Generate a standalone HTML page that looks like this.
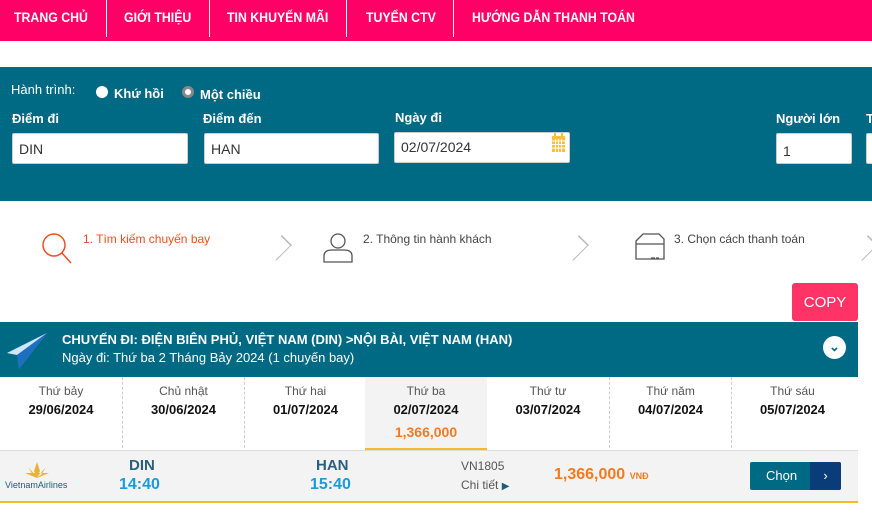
<!DOCTYPE html><html><head><meta charset="utf-8"><style>
*{margin:0;padding:0;box-sizing:border-box}
body{width:872px;height:526px;overflow:hidden;background:#fff;font-family:"Liberation Sans",sans-serif;position:relative}
.a{position:absolute}
.nav{left:0;top:0;width:872px;height:41px;background:#ff0066}
.nav span{position:absolute;top:9px;color:#fff;font-size:14px;font-weight:bold;transform:scaleX(.88);transform-origin:left}
.sep{position:absolute;top:0;width:1px;height:37px;background:#fff}
.teal{left:0;top:67px;width:872px;height:134px;background:#006a85}
.lbl{color:#fff;font-size:13px;font-weight:bold}
.in{background:#fff;border:1px solid #ccc;border-radius:2px;height:31px;font-size:14px;color:#333;padding:7px 0 0 6px}
.step{font-size:12px;color:#444}
.chev{width:14px;height:14px;border-right:1px solid #bbb;border-top:1px solid #bbb;transform:rotate(45deg) scaleY(1.6)}
.day{top:377px;width:122px;height:71px;text-align:center;font-size:12px;color:#555;padding-top:7px}
.day b{display:block;color:#111;font-size:13px;margin-top:4px}
</style></head><body>
<div class="a nav">
<span style="left:14px">TRANG CHỦ</span><div class="sep" style="left:106px"></div>
<span style="left:124px">GIỚI THIỆU</span><div class="sep" style="left:209px"></div>
<span style="left:227px">TIN KHUYẾN MÃI</span><div class="sep" style="left:346px"></div>
<span style="left:366px">TUYỂN CTV</span><div class="sep" style="left:453px"></div>
<span style="left:472px">HƯỚNG DẪN THANH TOÁN</span>
</div>
<div class="a teal">
<div class="a" style="left:11px;top:15px;color:#fff;font-size:13px">Hành trình:</div>
<div class="a" style="left:96px;top:19px;width:12px;height:12px;border-radius:50%;background:#fff"></div>
<div class="a lbl" style="left:114px;top:19px">Khứ hồi</div>
<div class="a" style="left:182px;top:19px;width:12px;height:12px;border-radius:50%;background:#fff;border:3px solid #888"></div>
<div class="a lbl" style="left:200px;top:20px">Một chiều</div>
<div class="a lbl" style="left:12px;top:44px">Điểm đi</div>
<div class="a lbl" style="left:203px;top:44px">Điểm đến</div>
<div class="a lbl" style="left:395px;top:43px">Ngày đi</div>
<div class="a lbl" style="left:776px;top:44px">Người lớn</div>
<div class="a lbl" style="left:866px;top:44px">T</div>
<div class="a in" style="left:12px;top:66px;width:176px">DIN</div>
<div class="a in" style="left:204px;top:66px;width:175px">HAN</div>
<div class="a in" style="left:394px;top:65px;width:176px;padding-top:6px">02/07/2024
<svg class="a" style="right:4px;top:-1px" width="13" height="22" viewBox="0 0 13 22"><rect x="0" y="4" width="13" height="16" fill="#fbbf3a"/><g stroke="#fff" stroke-width="1"><path d="M0 9H13M0 12.5H13M0 16H13M3.5 7V20M6.5 7V20M9.5 7V20"/></g><rect x="2" y="1" width="2" height="5" fill="#fbbf3a"/><rect x="9" y="1" width="2" height="5" fill="#fbbf3a"/></svg></div>
<div class="a in" style="left:776px;top:66px;width:76px;padding-top:9px">1</div>
<div class="a in" style="left:866px;top:66px;width:20px"></div>
</div>
<svg class="a" style="left:40px;top:231px" width="34" height="34"><circle cx="14" cy="14" r="11" fill="none" stroke="#f04e23" stroke-width="1.5"/><path d="M22 22L31 32" stroke="#f04e23" stroke-width="1.5"/></svg>
<div class="a step" style="left:83px;top:232px;color:#f04e23">1. Tìm kiếm chuyến bay</div>
<div class="a chev" style="left:272px;top:241px"></div>
<svg class="a" style="left:320px;top:231px" width="36" height="34"><circle cx="18" cy="10" r="7" fill="none" stroke="#555" stroke-width="1.3"/><path d="M4 31V25Q4 19 12 19H24Q32 19 32 25V31Z" fill="none" stroke="#555" stroke-width="1.3"/></svg>
<div class="a step" style="left:363px;top:232px">2. Thông tin hành khách</div>
<div class="a chev" style="left:569px;top:241px"></div>
<svg class="a" style="left:633px;top:231px" width="34" height="34"><path d="M3 10L10 3H26L31 8V28H3Z" fill="none" stroke="#555" stroke-width="1.3"/><path d="M3 13H31M18 27H22M23 27H26" stroke="#555" stroke-width="1.2"/></svg>
<div class="a step" style="left:674px;top:232px">3. Chọn cách thanh toán</div>
<div class="a chev" style="left:858px;top:241px"></div>
<div class="a" style="left:792px;top:283px;width:66px;height:38px;background:#ff3366;border-radius:3px;color:#fff;font-size:15px;text-align:center;line-height:40px">COPY</div>
<div class="a" style="left:0;top:322px;width:858px;height:55px;background:#006a85"></div>
<svg class="a" style="left:5px;top:331px" width="44" height="40"><path d="M2 22L42 2L14 38L12 24Z" fill="#3a8fd8"/><path d="M2 22L42 2L12 24Z" fill="#cfe6f8"/><path d="M12 24L42 2L14 38Z" fill="#1e6fc0"/></svg>
<div class="a" style="left:62px;top:332px;color:#fff;font-size:13px;font-weight:bold">CHUYẾN ĐI: ĐIỆN BIÊN PHỦ, VIỆT NAM (DIN) &gt;NỘI BÀI, VIỆT NAM (HAN)</div>
<div class="a" style="left:62px;top:350px;color:#fff;font-size:13px">Ngày đi: Thứ ba 2 Tháng Bảy 2024 (1 chuyến bay)</div>
<div class="a" style="left:823px;top:336px;width:23px;height:23px;border-radius:50%;background:#fff;text-align:center;color:#006a85;font-size:13px;font-weight:bold;line-height:22px">⌄</div>
<div class="a" style="left:365px;top:377px;width:122px;height:73px;background:#f3f3f3;border-bottom:2px solid #f7b82a"></div>
<div class="a day" style="left:0">Thứ bảy<b>29/06/2024</b></div>
<div class="a day" style="left:122px;border-left:1px dashed #ccc">Chủ nhật<b>30/06/2024</b></div>
<div class="a day" style="left:244px;border-left:1px dashed #ccc">Thứ hai<b>01/07/2024</b></div>
<div class="a day" style="left:365px">Thứ ba<b>02/07/2024</b><b style="color:#f47a20;font-size:14px;margin-top:7px">1,366,000</b></div>
<div class="a day" style="left:487px">Thứ tư<b>03/07/2024</b></div>
<div class="a day" style="left:609px;border-left:1px dashed #ccc">Thứ năm<b>04/07/2024</b></div>
<div class="a day" style="left:731px;border-left:1px dashed #ccc">Thứ sáu<b>05/07/2024</b></div>
<div class="a" style="left:0;top:450px;width:858px;height:53px;background:#f3f3f3;border-top:1px solid #ddd;border-bottom:2px solid #f7b82a"></div>
<svg class="a" style="left:25px;top:461px" width="24" height="18"><path d="M12 1L9 10L12 16L15 10Z M3 6L8 14L12 16Z M21 6L16 14L12 16Z M0 12L12 17L24 12" fill="#e8b23a"/></svg>
<div class="a" style="left:5px;top:480px;font-size:9px;color:#1a5e7a">VietnamAirlines</div>
<div class="a" style="left:129px;top:457px;font-size:15px;font-weight:bold;color:#2a5f80">DIN</div>
<div class="a" style="left:119px;top:476px;font-size:16px;font-weight:bold;color:#1a9be0">14:40</div>
<div class="a" style="left:316px;top:457px;font-size:15px;font-weight:bold;color:#2a5f80">HAN</div>
<div class="a" style="left:310px;top:476px;font-size:16px;font-weight:bold;color:#1a9be0">15:40</div>
<div class="a" style="left:461px;top:459px;font-size:12px;color:#555">VN1805</div>
<div class="a" style="left:461px;top:478px;font-size:12px;color:#555">Chi tiết <span style="color:#1a5e7a;font-size:10px">▶</span></div>
<div class="a" style="left:554px;top:466px;font-size:16px;font-weight:bold;color:#f47a20">1,366,000 <span style="font-size:9px;color:#f47a20">VNĐ</span></div>
<div class="a" style="left:750px;top:462px;width:91px;height:28px;background:#006a85;border-radius:2px;color:#fff;font-size:13px;line-height:28px;padding-left:16px">Chọn</div>
<div class="a" style="left:810px;top:462px;width:31px;height:28px;background:#0a3c7a;border-radius:0 2px 2px 0;color:#fff;text-align:center;line-height:27px;font-size:13px">›</div>
</body></html>
